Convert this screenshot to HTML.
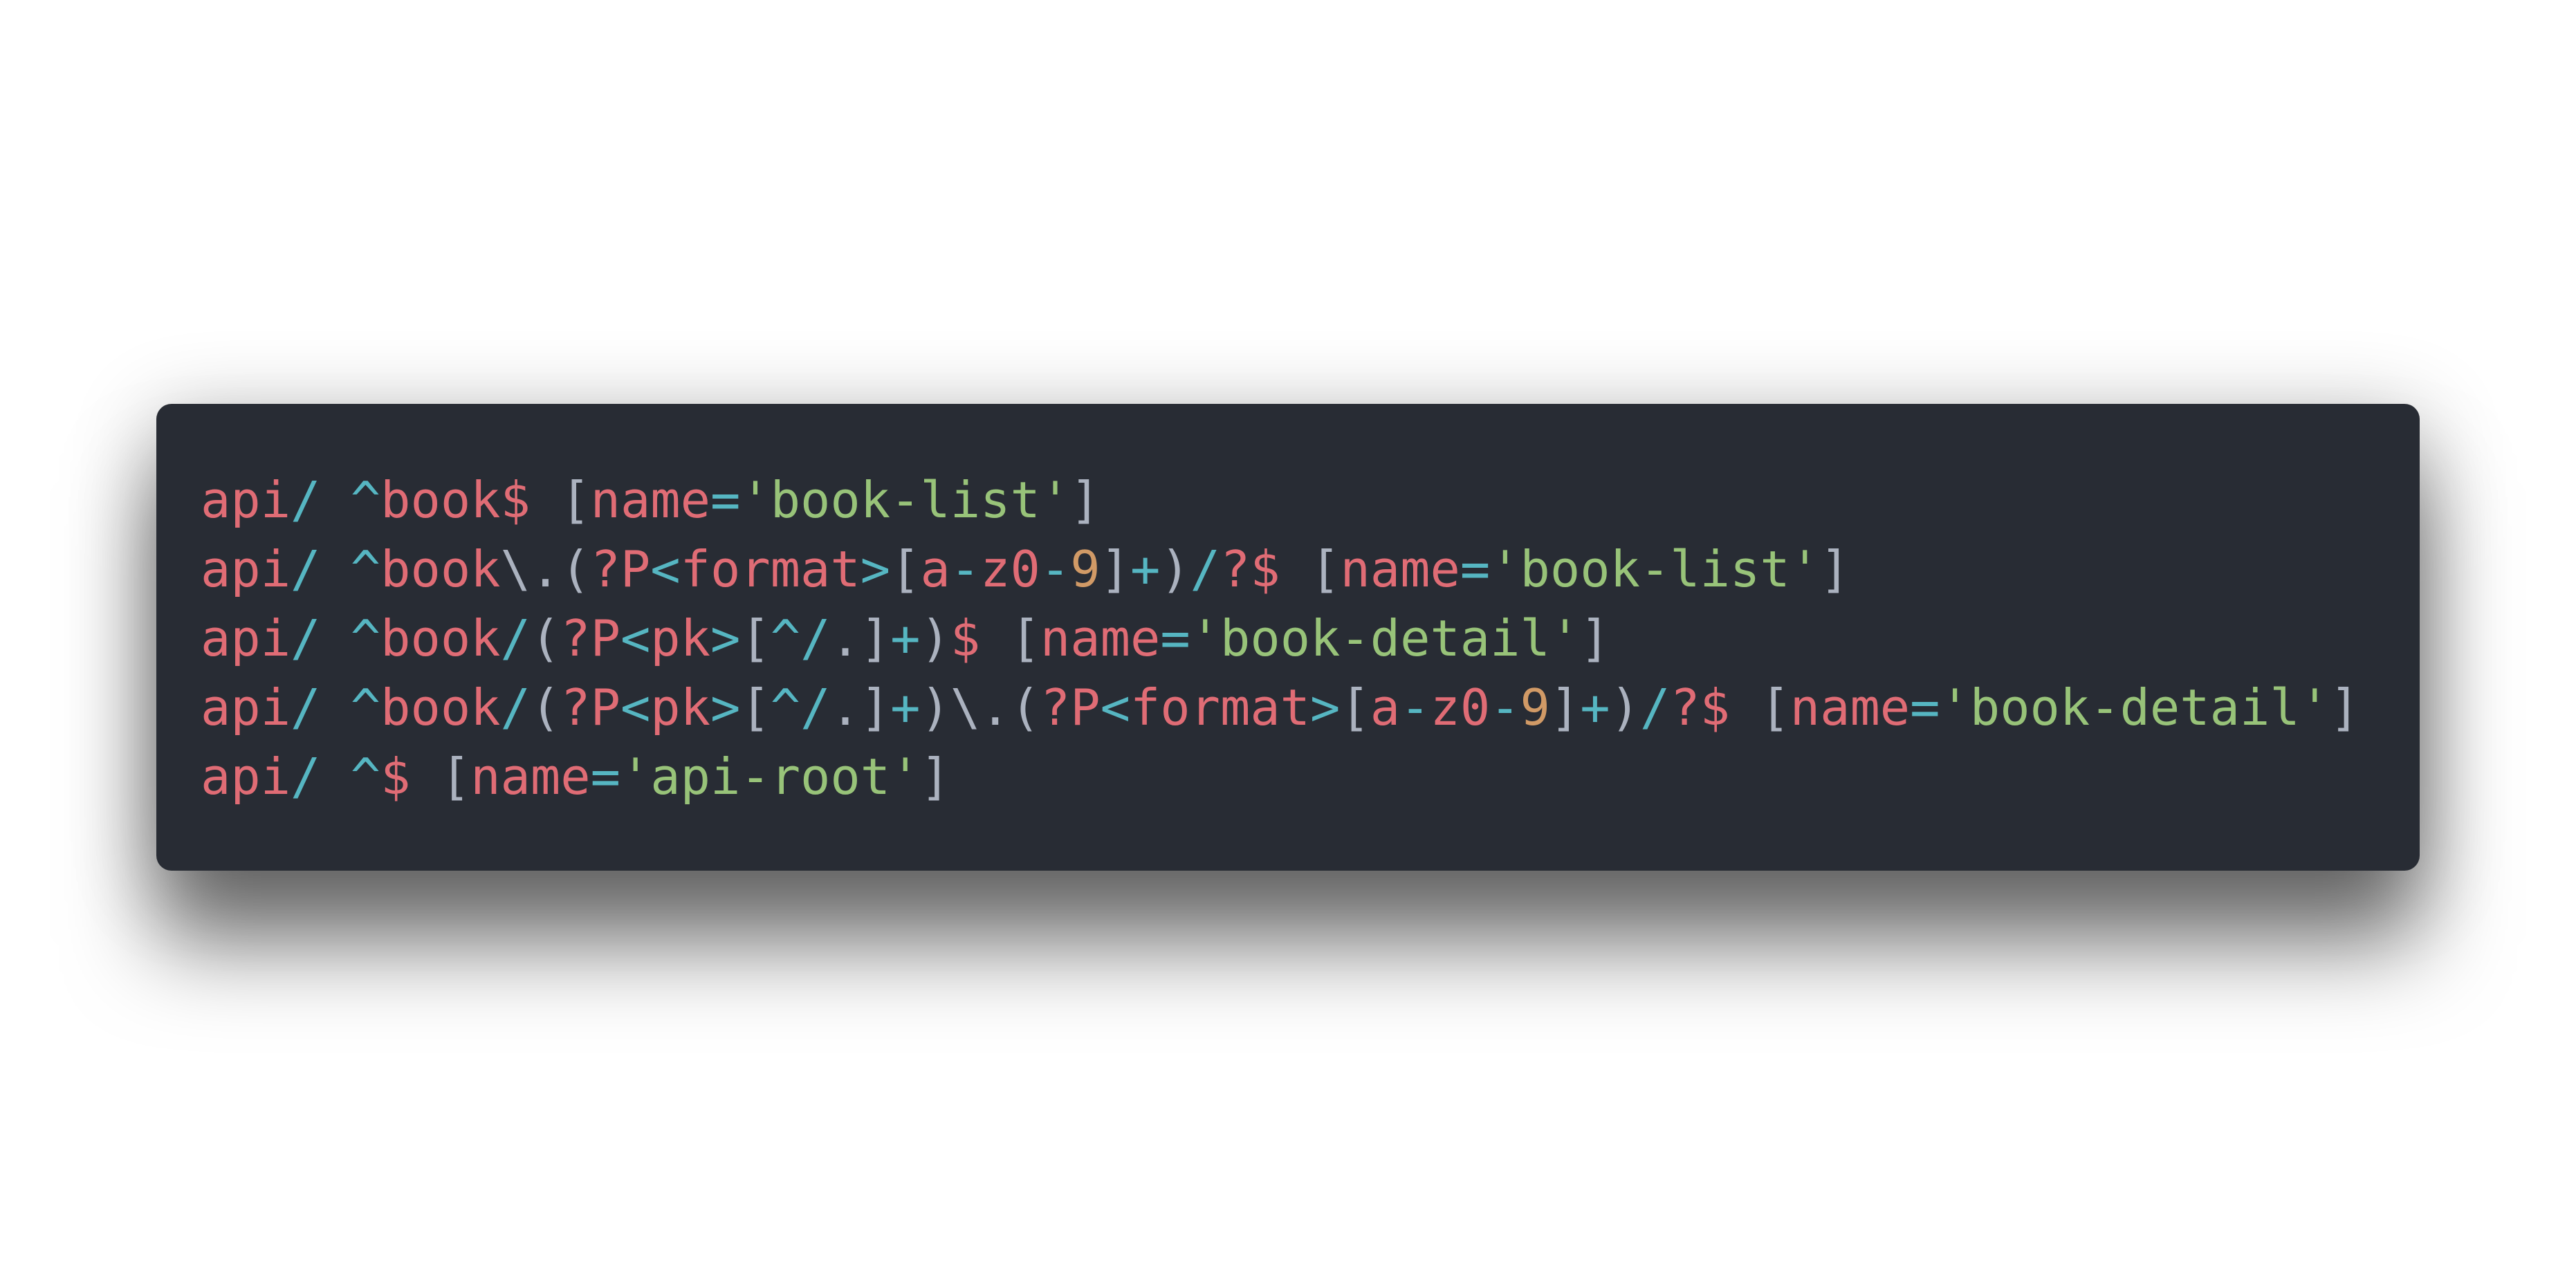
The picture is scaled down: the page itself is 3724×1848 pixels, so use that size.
<!DOCTYPE html>
<html><head><meta charset="utf-8">
<style>
html,body{margin:0;padding:0;background:#fff;width:3724px;height:1848px;overflow:hidden}
.card{position:absolute;left:226px;top:584px;width:3272px;height:675px;background:#282c34;border-radius:22px;
box-shadow:0 110px 230px rgba(0,0,0,0.5),0 20px 120px rgba(0,0,0,0.3)}
pre{position:absolute;left:64px;top:89px;margin:0;font-family:"DejaVu Sans Mono","Liberation Mono",monospace;font-size:72px;line-height:100px;color:#abb2bf;white-space:pre}
.r{color:#e06c75}.c{color:#56b6c2}.g{color:#98c379}.w{color:#abb2bf}.o{color:#d19a66}
</style></head><body>
<div class="card"><pre><span class="r">api</span><span class="c">/</span> <span class="c">^</span><span class="r">book$</span> <span class="w">[</span><span class="r">name</span><span class="c">=</span><span class="g">'book-list'</span><span class="w">]</span>
<span class="r">api</span><span class="c">/</span> <span class="c">^</span><span class="r">book</span><span class="w">\.(</span><span class="r">?P</span><span class="c">&lt;</span><span class="r">format</span><span class="c">&gt;</span><span class="w">[</span><span class="r">a</span><span class="c">-</span><span class="r">z0</span><span class="c">-</span><span class="o">9</span><span class="w">]</span><span class="c">+</span><span class="w">)</span><span class="c">/</span><span class="r">?$</span> <span class="w">[</span><span class="r">name</span><span class="c">=</span><span class="g">'book-list'</span><span class="w">]</span>
<span class="r">api</span><span class="c">/</span> <span class="c">^</span><span class="r">book</span><span class="c">/</span><span class="w">(</span><span class="r">?P</span><span class="c">&lt;</span><span class="r">pk</span><span class="c">&gt;</span><span class="w">[</span><span class="c">^/</span><span class="w">.]</span><span class="c">+</span><span class="w">)</span><span class="r">$</span> <span class="w">[</span><span class="r">name</span><span class="c">=</span><span class="g">'book-detail'</span><span class="w">]</span>
<span class="r">api</span><span class="c">/</span> <span class="c">^</span><span class="r">book</span><span class="c">/</span><span class="w">(</span><span class="r">?P</span><span class="c">&lt;</span><span class="r">pk</span><span class="c">&gt;</span><span class="w">[</span><span class="c">^/</span><span class="w">.]</span><span class="c">+</span><span class="w">)\.(</span><span class="r">?P</span><span class="c">&lt;</span><span class="r">format</span><span class="c">&gt;</span><span class="w">[</span><span class="r">a</span><span class="c">-</span><span class="r">z0</span><span class="c">-</span><span class="o">9</span><span class="w">]</span><span class="c">+</span><span class="w">)</span><span class="c">/</span><span class="r">?$</span> <span class="w">[</span><span class="r">name</span><span class="c">=</span><span class="g">'book-detail'</span><span class="w">]</span>
<span class="r">api</span><span class="c">/</span> <span class="c">^</span><span class="r">$</span> <span class="w">[</span><span class="r">name</span><span class="c">=</span><span class="g">'api-root'</span><span class="w">]</span></pre></div>
</body></html>
